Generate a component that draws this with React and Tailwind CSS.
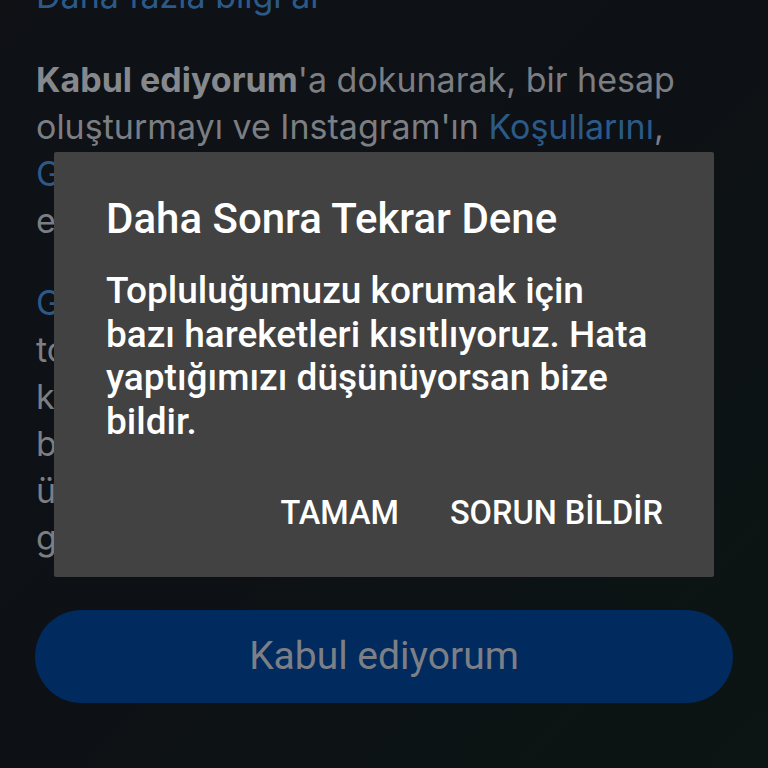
export default function App() {
  const para2 = [
    { text: 'Gizlilik İlkesi', rest: ', hesap oluşturduğunda', link: true },
    { text: 'topladığımız bilgileri ve bunları' },
    { text: 'kullanma şeklimizi açıklar. Bu' },
    { text: 'bilgileri ürünlerimizi sağlamak,' },
    { text: 'ürünlerimizi kişiselleştirmek ve' },
    { text: 'geliştirmek için kullanırız.' },
  ]

  return (
    <div className="relative h-[768px] w-full overflow-hidden bg-gradient-to-br from-[#0f1115] via-[#0d1115] to-[#0c1513]">
      {/* Background page */}
      <div className="flex flex-col px-[36px] -mt-[28px] font-['Inter',sans-serif] text-[34px] leading-[47px] text-[#7b7e82]">
        <p className="whitespace-nowrap text-[#2c5a88]">Daha fazla bilgi al</p>

        <div className="mt-[37px]">
          <p className="whitespace-nowrap">
            <span className="font-bold text-[#85888c]">Kabul ediyorum</span>'a dokunarak, bir hesap
          </p>
          <p className="whitespace-nowrap">
            oluşturmayı ve Instagram'ın <span className="text-[#2c5a88]">Koşullarını</span>,
          </p>
          <p className="whitespace-nowrap">
            <span className="text-[#2c5a88]">Gizlilik İlkesi'ni</span> ve çerez
          </p>
          <p className="whitespace-nowrap">etmiş olursun.</p>
        </div>

        <div className="mt-[35px]">
          {para2.map((l, i) => (
            <p key={i} className="whitespace-nowrap">
              {l.link ? (
                <>
                  <span className="text-[#2c5a88]">{l.text}</span>
                  {l.rest}
                </>
              ) : (
                l.text
              )}
            </p>
          ))}
        </div>

        <button className="mt-[49px] -mx-[1px] flex h-[93px] items-center justify-center rounded-full bg-[#012a5e] font-['Roboto',sans-serif] text-[39px] text-[#7c8086]">
          Kabul ediyorum
        </button>
      </div>

      {/* Dialog */}
      <div className="absolute left-[54px] top-[152px] flex h-[425px] w-[660px] flex-col rounded-[2px] bg-[#424242] pl-[52px] pr-[51px] pt-[42px] font-['Roboto',sans-serif] text-white">
        <h2 className="text-[42px] font-medium leading-[50px]">Daha Sonra Tekrar Dene</h2>
        <p className="mt-[25px] whitespace-nowrap text-[37px] font-medium leading-[43.5px]">
          Topluluğumuzu korumak için
          <br />
          bazı hareketleri kısıtlıyoruz. Hata
          <br />
          yaptığımızı düşünüyorsan bize
          <br />
          bildir.
        </p>
        <div className="mt-auto mb-[44px] flex justify-end gap-[51px] text-[32.5px] font-medium leading-[40px]">
          <span>TAMAM</span>
          <span>SORUN BİLDİR</span>
        </div>
      </div>
    </div>
  )
}
